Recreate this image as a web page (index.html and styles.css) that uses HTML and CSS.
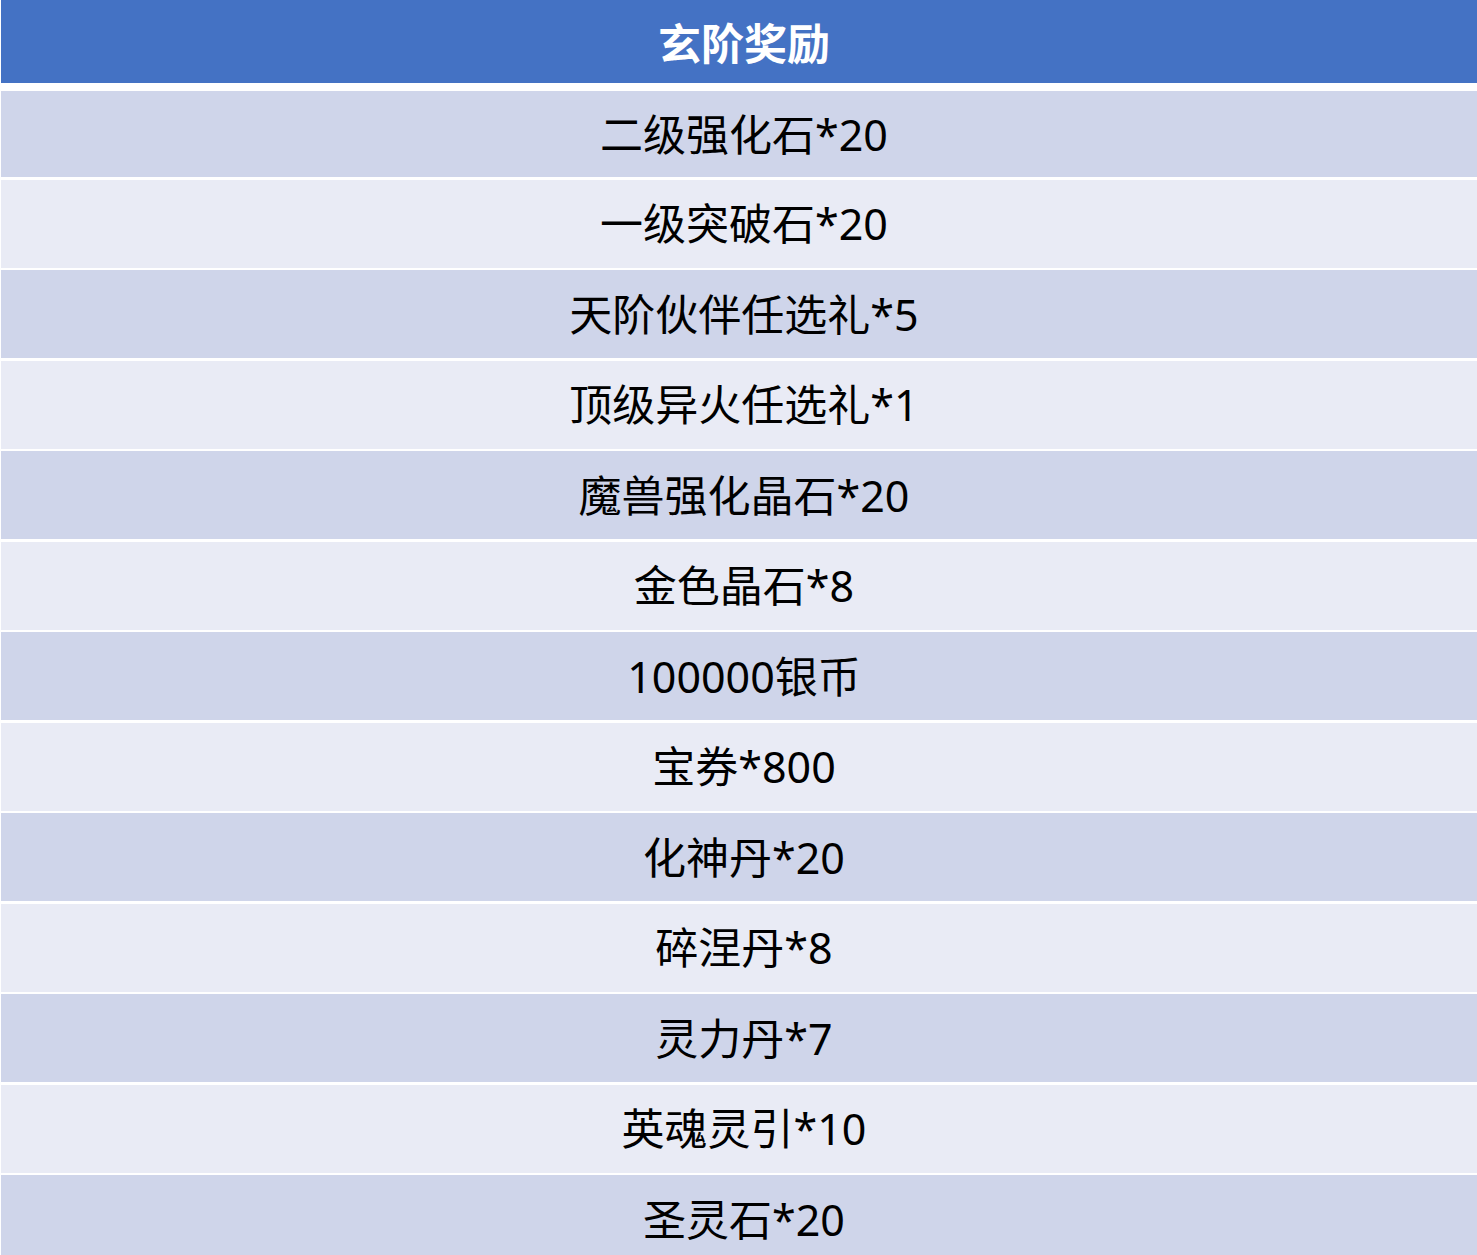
FILE: index.html
```html
<!DOCTYPE html>
<html lang="zh-CN">
<head>
<meta charset="utf-8">
<title>玄阶奖励</title>
<link rel="stylesheet" href="styles.css">
</head>
<body>
<div class="page">
  <div class="table">
    <div class="head">玄阶奖励</div>
    <div class="rows">
      <div class="row odd first">二级强化石*20</div>
      <div class="row even">一级突破石*20</div>
      <div class="row odd">天阶伙伴任选礼*5</div>
      <div class="row even">顶级异火任选礼*1</div>
      <div class="row odd">魔兽强化晶石*20</div>
      <div class="row even">金色晶石*8</div>
      <div class="row odd">100000银币</div>
      <div class="row even">宝券*800</div>
      <div class="row odd">化神丹*20</div>
      <div class="row even">碎涅丹*8</div>
      <div class="row odd">灵力丹*7</div>
      <div class="row even">英魂灵引*10</div>
      <div class="row odd">圣灵石*20</div>
    </div>
  </div>
</div>
</body>
</html>
```
FILE: styles.css
```css
html, body {
  margin: 0;
  padding: 0;
  background: #ffffff;
  overflow: hidden;
}
.page {
  width: 1477px;
  height: 1255px;
  overflow: hidden;
  padding-left: 1px;
  box-sizing: border-box;
}
.table {
  width: 1486px;
  display: flex;
  flex-direction: column;
  font-family: "Noto Sans", "Noto Sans CJK SC", sans-serif;
  font-size: 43px;
  color: #000000;
}
.head {
  height: 83px;
  background: #4472C4;
  color: #ffffff;
  font-weight: 700;
  display: flex;
  align-items: center;
  justify-content: center;
}
.rows {
  display: flex;
  flex-direction: column;
  gap: 2.5px;
  padding-top: 8px;
}
.row {
  height: 88px;
  display: flex;
  align-items: center;
  justify-content: center;
  line-height: 1;
}
.row.first {
  height: 86px;
}
.odd {
  background: #CFD5EA;
}
.even {
  background: #E9EBF5;
}
```
